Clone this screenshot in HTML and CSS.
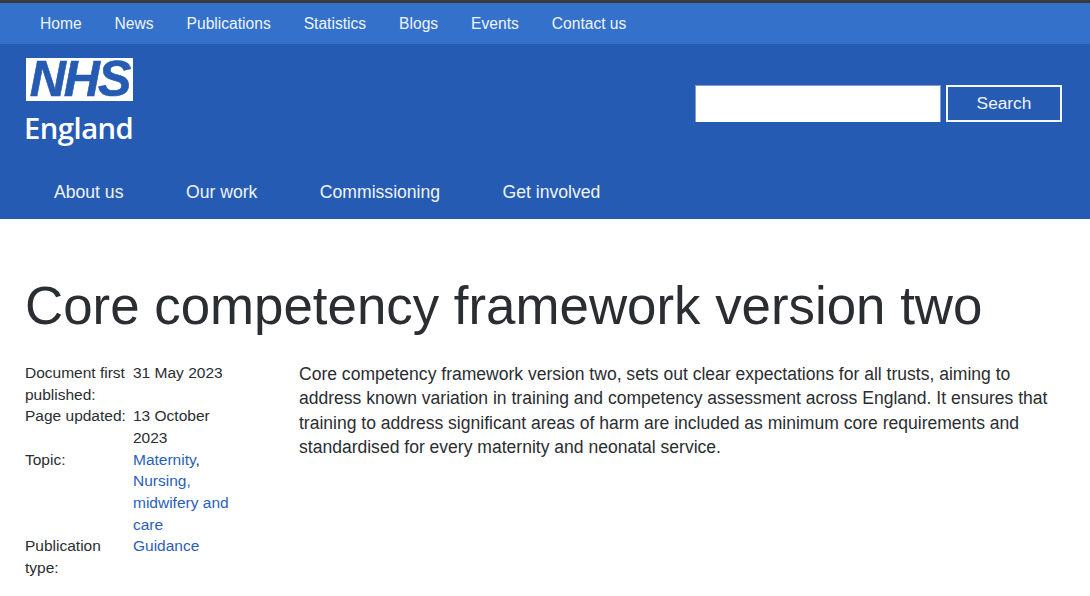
FILE: index.html
```html
<!DOCTYPE html>
<html lang="en">

<head>
    <meta charset="UTF-8">
    <meta name="viewport" content="width=device-width, initial-scale=1.0">
    <title>Core competency framework version two</title>
    <link rel="stylesheet" href="styles.css">
</head>

<body>
    <div class="top-nav">
        <a href="#">Home</a>
        <a href="#">News</a>
        <a href="#">Publications</a>
        <a href="#">Statistics</a>
        <a href="#">Blogs</a>
        <a href="#">Events</a>
        <a href="#">Contact us</a>
    </div>

    <div class="header">
        <div class="header-row">
            <a href="#" class="logo">
                <span class="logo-box">NHS</span>
                <span class="logo-name">England</span>
            </a>
            <form class="search">
                <input type="text" class="search-input">
                <button type="button" class="search-button">Search</button>
            </form>
        </div>
        <div class="main-nav">
            <a href="#">About us</a>
            <a href="#">Our work</a>
            <a href="#">Commissioning</a>
            <a href="#">Get involved</a>
        </div>
    </div>

    <div class="content">
        <h1>Core competency framework version two</h1>
        <div class="columns">
            <div class="meta">
                <div>Document first published:</div>
                <div>31 May 2023</div>
                <div>Page updated:</div>
                <div>13 October 2023</div>
                <div>Topic:</div>
                <div><a href="#">Maternity</a>, <a href="#">Nursing, midwifery and care</a></div>
                <div>Publication type:</div>
                <div><a href="#">Guidance</a></div>
            </div>
            <p class="summary">Core competency framework version two, sets out clear expectations for all trusts, aiming to address known variation in training and competency assessment across England. It ensures that training to address significant areas of harm are included as minimum core requirements and standardised for every maternity and neonatal service.</p>
        </div>
    </div>
</body>

</html>
```

FILE: styles.css
```css
* {
    box-sizing: border-box;
}

body {
    margin: 0;
    font-family: "Liberation Sans", Arial, sans-serif;
    color: #2a2d31;
    background: white;
    overflow: hidden;
}

a {
    text-decoration: none;
    color: #2a5fb8;
}

.top-nav {
    display: flex;
    gap: 33px;
    height: 44px;
    padding-left: 40px;
    align-items: center;
    border-top: 3px solid #3a3a3c;
    background: #3371cb;
}

.top-nav a {
    color: #f0f4fb;
    font-size: 15.6px;
}

.header {
    height: 175px;
    background: #265bb3;
}

.header-row {
    display: flex;
    justify-content: space-between;
    padding: 14px 28px 0 24px;
    height: 137px;
}

.logo {
    display: flex;
    flex-direction: column;
    width: 112px;
    color: white;
}

.logo-box {
    width: 107px;
    height: 43px;
    margin-left: 2px;
    background: white;
    color: #265bb3;
    font-size: 50px;
    line-height: 43px;
    font-weight: bold;
    font-style: italic;
    letter-spacing: -2px;
    text-align: center;
    -webkit-text-stroke: 0.6px #265bb3;
}

.logo-name {
    margin-top: 9px;
    font-family: "Open Sans", sans-serif;
    font-size: 29.2px;
    line-height: 36px;
    font-weight: 600;
    letter-spacing: -0.5px;
}

.search {
    display: flex;
    gap: 5px;
    padding-top: 27px;
}

.search-input {
    width: 246px;
    height: 37px;
    border: 1px solid #7f9fd6;
    border-bottom: 0;
    background: white;
}

.search-button {
    width: 116px;
    height: 37px;
    border: 2px solid #f4f7fc;
    background: #265bb3;
    color: #f0f4fb;
    font-family: inherit;
    font-size: 17.3px;
}

.main-nav {
    display: flex;
    gap: 62.5px;
    padding-left: 54px;
}

.main-nav a {
    color: #f0f4fb;
    font-size: 17.6px;
    line-height: 22px;
}

.content {
    padding: 53px 25px 0;
}

h1 {
    margin: 0;
    font-size: 52.85px;
    line-height: 68px;
    font-weight: normal;
    white-space: nowrap;
}

.columns {
    display: flex;
    margin-top: 22px;
}

.meta {
    display: grid;
    grid-template-columns: 108px 108px;
    width: 216px;
    font-size: 15.5px;
    line-height: 21.65px;
    flex-shrink: 0;
}

.summary {
    margin: 0 0 0 58px;
    font-size: 17.55px;
    line-height: 24.4px;
    width: 766px;
}
```
